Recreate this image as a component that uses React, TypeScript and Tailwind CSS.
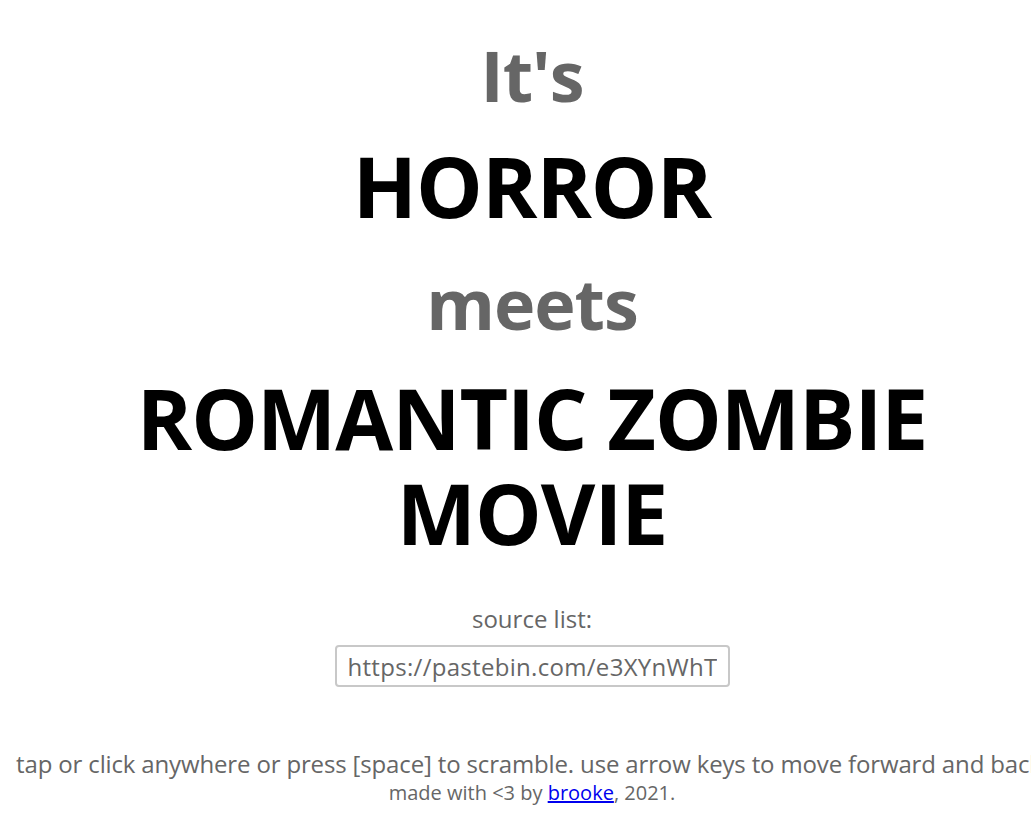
import React from 'react';

const font = { fontFamily: '"Open Sans", "Noto Sans", sans-serif' };

export default function App() {
  return (
    <div className="min-h-screen bg-white overflow-hidden" style={font}>
      <div className="w-[1064px] flex flex-col items-center text-center pt-[30px]">
        <div className="text-[70px] leading-[90px] font-bold tracking-[-1px] text-[#666666]">It's</div>
        <div className="mt-[18px] text-[84px] leading-[96px] font-bold tracking-[-1px] text-black">HORROR</div>
        <div className="mt-[24px] text-[70px] leading-[90px] font-bold tracking-[-1px] text-[#666666]">meets</div>
        <div className="mt-[22px] max-w-[880px] text-[84px] leading-[95px] font-bold tracking-[-1px] text-black">
          ROMANTIC ZOMBIE MOVIE
        </div>
        <div className="mt-[43px] text-[24px] leading-[32px] font-medium text-[#666666]">source list:</div>
        <input
          readOnly
          value="https://pastebin.com/e3XYnWhT"
          className="mt-[10px] w-[395px] h-[42px] px-[11px] border-2 border-[#c8c8c8] rounded-[4px] text-[24px] tracking-[0.3px] text-[#666666] font-medium outline-none"
          style={font}
        />
        <div className="mt-[62px] whitespace-nowrap text-[24px] leading-[30px] font-medium tracking-[-0.15px] text-[#666666]">
          tap or click anywhere or press [space] to scramble. use arrow keys to move forward and back.
        </div>
        <div className="text-[20px] leading-[28px] font-medium text-[#666666]">
          made with &lt;3 by <a href="#" className="text-[#0000ee] underline">brooke</a>, 2021.
        </div>
      </div>
    </div>
  );
}
